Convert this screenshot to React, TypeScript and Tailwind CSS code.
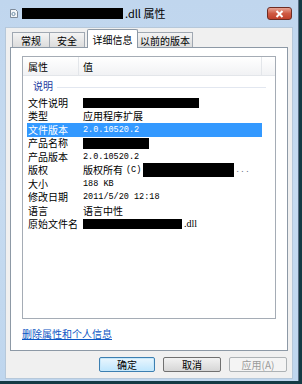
const CJK = "font-['Noto_Sans_CJK_SC','Liberation_Sans',sans-serif]";
const MONO = "font-['Liberation_Mono','Noto_Sans_CJK_SC',monospace]";

function Redacted({ w, h = 10 }: { w: number; h?: number }) {
  return <span className="inline-block bg-black align-middle" style={{ width: w, height: h }} />;
}

type Row = { label: string; value: React.ReactNode; selected?: boolean };

const ROWS: Row[] = [
  { label: "文件说明", value: <Redacted w={116} /> },
  { label: "类型", value: <span>应用程序扩展</span> },
  { label: "文件版本", value: <span className={`${MONO} text-[8.5px]`}>2.0.10520.2</span>, selected: true },
  { label: "产品名称", value: <Redacted w={66} h={11} /> },
  { label: "产品版本", value: <span className={`${MONO} text-[8.5px]`}>2.0.10520.2</span> },
  {
    label: "版权",
    value: (
      <span className="flex items-center whitespace-nowrap">
        版权所有 <span className={`${MONO} text-[8.5px] ml-[3px] mr-[2px]`}>(C)</span>
        <Redacted w={91} h={14} />
        <span className={`${MONO} text-[8px] text-gray-500 ml-[1px]`}>...</span>
      </span>
    ),
  },
  { label: "大小", value: <span className={`${MONO} text-[8.5px]`}>188 KB</span> },
  { label: "修改日期", value: <span className={`${MONO} text-[8.5px]`}>2011/5/20 12:18</span> },
  { label: "语言", value: <span>语言中性</span> },
  {
    label: "原始文件名",
    value: (
      <span className="flex items-center">
        <Redacted w={99} />
        <span className="ml-[2px] font-['Liberation_Serif',serif] text-[10px]">.dll</span>
      </span>
    ),
  },
];

function Tab({ label, width, active }: { label: string; width: number; active?: boolean }) {
  if (active) {
    return (
      <div
        className="relative z-10 -mb-px flex h-[19px] items-center justify-center border border-b-0 border-[#8d99a6] bg-white rounded-t-[2px]"
        style={{ width }}
      >
        {label}
      </div>
    );
  }
  return (
    <div
      className="flex h-[15px] items-center justify-center border border-b-0 border-[#a0a8b2] bg-gradient-to-b from-[#f4f4f4] to-[#dcdcdc] -ml-px first:ml-0"
      style={{ width }}
    >
      {label}
    </div>
  );
}

function Button({ label, primary, disabled }: { label: string; primary?: boolean; disabled?: boolean }) {
  return (
    <div
      className={`flex h-[15px] items-center justify-center rounded-[2px] border text-[10px] ${
        primary
          ? "border-[#3c7fb1] bg-gradient-to-b from-[#eaf6fd] to-[#bee6fd] shadow-[inset_0_0_0_1px_#c7e8fb]"
          : disabled
          ? "border-[#adb2b5] bg-[#f4f4f4] text-[#9a9a9a]"
          : "border-[#707070] bg-gradient-to-b from-[#f2f2f2] to-[#d6d6d6]"
      }`}
      style={{ width: primary ? 56 : 58 }}
    >
      {label}
    </div>
  );
}

export default function App() {
  return (
    <div className={`h-[384px] w-[302px] overflow-hidden bg-[#143a44] ${CJK} text-black`}>
      {/* window frame */}
      <div className="flex h-[381px] w-[299px] flex-col bg-gradient-to-b from-[#c0d6ee] via-[#c6dbf0] to-[#bfd6ee] border-r border-[#5a6f85]">
        {/* title bar */}
        <div className="relative flex h-[27px] items-center pl-[10px]">
          <svg width="8" height="9" viewBox="0 0 8 9" className="mr-[4px]">
            <path d="M0.5 0.5h5l2 2v6h-7z" fill="#f4f6f8" stroke="#7d8a99" />
            <circle cx="3.5" cy="5" r="1.6" fill="none" stroke="#6f8fa8" />
          </svg>
          <Redacted w={101} h={11} />
          <span className="ml-[2px] text-[11px] leading-none">.dll 属性</span>
          <div className="absolute right-[6px] top-[7px] flex h-[13px] w-[25px] items-center justify-center rounded-[3px] border border-[#6e2c22] bg-gradient-to-b from-[#e6a394] via-[#cf5a43] to-[#c0402a]">
            <svg width="9" height="8" viewBox="0 0 9 8">
              <path d="M1.5 1 7.5 7M7.5 1 1.5 7" stroke="#ffffff" strokeWidth="2" />
            </svg>
          </div>
        </div>

        {/* client area */}
        <div className="mx-[5px] mb-[2px] flex flex-1 flex-col border border-[#b6c8da] bg-[#f0f0f0] text-[10px]">
          <div className="flex items-end pl-[6px] pt-[1px]">
            <Tab label="常规" width={38} />
            <Tab label="安全" width={36} />
            <div className="w-[2px]" />
            <Tab label="详细信息" width={51} active />
            <Tab label="以前的版本" width={56} />
          </div>

          {/* tab panel */}
          <div className="mx-[4px] flex h-[304px] flex-col border border-[#8d99a6] bg-white px-[11px] pt-[8px]">
            <div className="flex h-[263px] flex-col border border-[#a5acb5]">
              {/* header */}
              <div className="flex h-[19px] bg-gradient-to-b from-[#ffffff] to-[#f1f2f4] border-b border-[#e3e6ea]">
                <div className="flex w-[56px] items-center border-r border-[#e3e6ea] pl-[5px]">属性</div>
                <div className="flex w-[183px] items-center border-r border-[#e3e6ea] pl-[4px]">值</div>
                <div className="flex-1" />
              </div>

              {/* group */}
              <div className="flex h-[19px] items-center pl-[10px] pr-[9px] text-[#1e3ba0]">
                <span>说明</span>
                <span className="ml-[4px] mt-[3px] h-px flex-1 bg-[#e2e7f0]" />
              </div>

              <div className="mt-[1px] flex flex-col pl-[4px]">
                {ROWS.map((r) => (
                  <div
                    key={r.label}
                    className={`flex h-[13.5px] w-[235px] items-center leading-none ${
                      r.selected ? "bg-[#3399ff] text-white" : ""
                    }`}
                  >
                    <div className="w-[56px] shrink-0 pl-[1px]">{r.label}</div>
                    <div className="flex items-center">{r.value}</div>
                  </div>
                ))}
              </div>
            </div>

            <div className="mt-[10px] text-[10px] leading-none text-[#0b56c4] underline">删除属性和个人信息</div>
          </div>

          {/* buttons */}
          <div className="mt-[6px] flex justify-end gap-[8px] pr-[5px]">
            <Button label="确定" primary />
            <Button label="取消" />
            <Button label="应用(A)" disabled />
          </div>
        </div>
      </div>
    </div>
  );
}
